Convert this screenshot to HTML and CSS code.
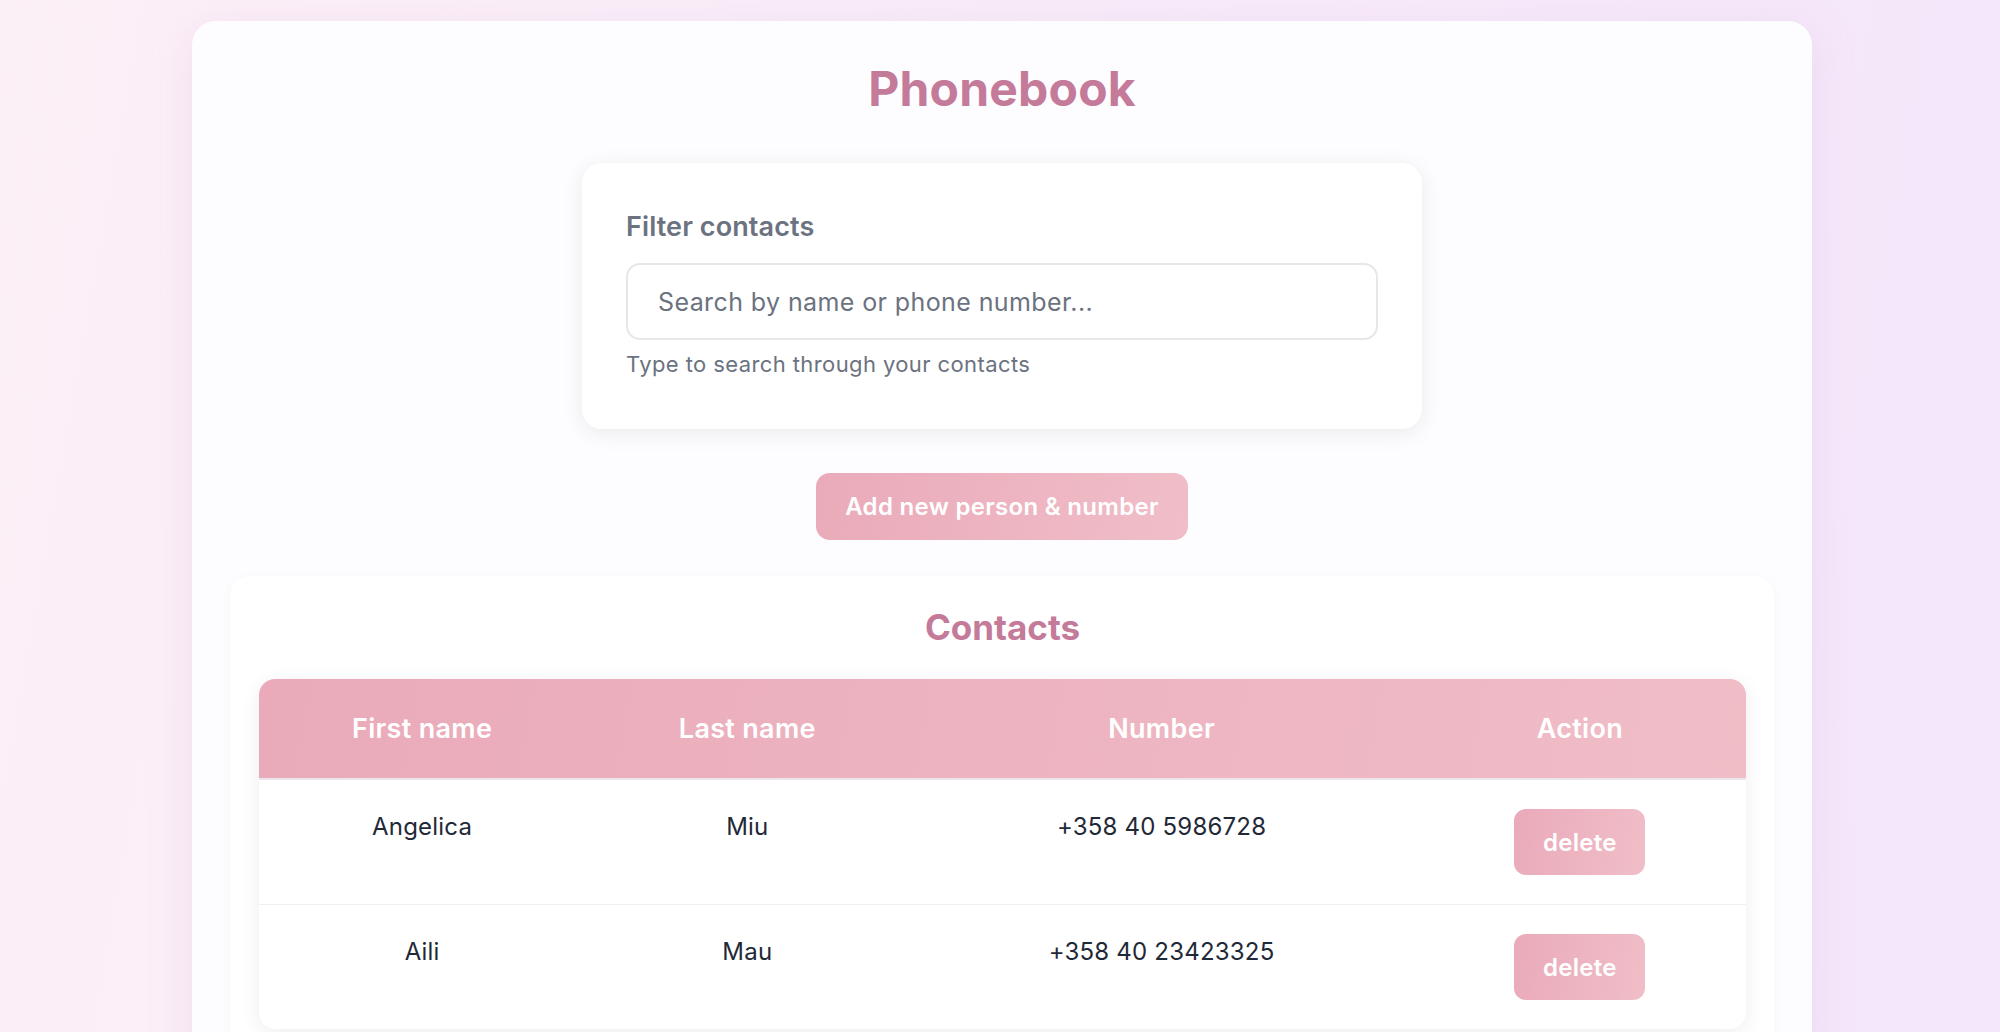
FILE: index.html
```html
<!DOCTYPE html>
<html lang="en">
<head>
<meta charset="utf-8">
<title>Phonebook</title>
<link rel="stylesheet" href="styles.css">
</head>
<body>
<main class="app">
  <h1 class="title">Phonebook</h1>

  <section class="filter-card">
    <label class="filter-label" for="filter">Filter contacts</label>
    <input id="filter" class="filter-input" type="text" placeholder="Search by name or phone number...">
    <p class="filter-help">Type to search through your contacts</p>
  </section>

  <div class="add-row">
    <button class="add-btn" type="button">Add new person &amp; number</button>
  </div>

  <section class="contacts-card">
    <h2 class="contacts-title">Contacts</h2>
    <table class="contacts-table">
      <colgroup>
        <col class="col-first">
        <col class="col-last">
        <col class="col-number">
        <col class="col-action">
      </colgroup>
      <thead>
        <tr>
          <th>First name</th>
          <th>Last name</th>
          <th>Number</th>
          <th>Action</th>
        </tr>
      </thead>
      <tbody>
        <tr>
          <td>Angelica</td>
          <td>Miu</td>
          <td>+358 40 5986728</td>
          <td><button class="delete-btn" type="button">delete</button></td>
        </tr>
        <tr>
          <td>Aili</td>
          <td>Mau</td>
          <td>+358 40 23423325</td>
          <td><button class="delete-btn" type="button">delete</button></td>
        </tr>
      </tbody>
    </table>
  </section>
</main>
</body>
</html>
```

FILE: styles.css
```css
* {
  box-sizing: border-box;
}

html, body {
  margin: 0;
  padding: 0;
}

body {
  min-height: 100vh;
  background: linear-gradient(100deg, #fcf0f7 0%, #f8ebf9 50%, #f4e6fb 100%);
  font-family: Inter, "Noto Sans", "Liberation Sans", sans-serif;
  color: #1f2937;
  padding: 21px 0 40px 4px;
}

.app {
  width: 1620px;
  margin: 0 auto;
  background: #fdfcff;
  border-radius: 24px;
  padding: 38px 38px 40px;
  box-shadow: 0 10px 40px rgba(214, 170, 214, 0.25);
}

.title {
  margin: 0;
  text-align: center;
  font-size: 48px;
  line-height: 60px;
  font-weight: 700;
  letter-spacing: 0.2px;
  color: #c47a99;
}

.filter-card {
  width: 840px;
  margin: 44px auto 0;
  background: #ffffff;
  border-radius: 20px;
  padding: 46px 44px 49px;
  box-shadow: 0 4px 22px rgba(0, 0, 0, 0.08);
}

.filter-label {
  display: block;
  font-size: 27px;
  line-height: 36px;
  font-weight: 600;
  letter-spacing: 0.1px;
  color: #6b7280;
}

.filter-input {
  display: block;
  width: 100%;
  height: 77px;
  margin-top: 18px;
  padding: 0 30px;
  border: 2px solid #e5e7eb;
  border-radius: 14px;
  font-family: inherit;
  font-size: 25px;
  letter-spacing: 0.4px;
  color: #1f2937;
  background: #fff;
  outline: none;
}

.filter-input::placeholder {
  color: #6b7280;
}

.filter-help {
  margin: 8px 0 0;
  font-size: 22px;
  line-height: 32px;
  letter-spacing: 0.4px;
  color: #6b7280;
}

.add-row {
  display: flex;
  justify-content: center;
  margin-top: 44px;
}

.add-btn {
  width: 372px;
  height: 67px;
  border: none;
  border-radius: 14px;
  background: linear-gradient(100deg, #eaaab9 0%, #f0bec8 100%);
  color: #ffffff;
  font-family: inherit;
  font-size: 24px;
  font-weight: 600;
  letter-spacing: 0.3px;
  cursor: pointer;
}

.contacts-card {
  margin-top: 36px;
  background: #ffffff;
  border-radius: 20px;
  padding: 30px 28px 30px 29px;
  box-shadow: 0 2px 12px rgba(0, 0, 0, 0.03);
}

.contacts-title {
  margin: 0 0 30px;
  text-align: center;
  font-size: 35px;
  line-height: 43px;
  font-weight: 700;
  color: #c47a99;
}

.contacts-table {
  width: 100%;
  table-layout: fixed;
  border-collapse: separate;
  border-spacing: 0;
  border-radius: 16px;
  overflow: hidden;
  box-shadow: 0 4px 20px rgba(0, 0, 0, 0.07);
  background: #fff;
}

.col-first { width: 326px; }
.col-last { width: 324px; }
.col-number { width: 504px; }
.col-action { width: 332px; }

.contacts-table thead tr {
  background: linear-gradient(100deg, #eaaab9 0%, #f0bdc7 100%);
}

.contacts-table th {
  height: 101px;
  padding: 0 16px;
  text-align: center;
  vertical-align: middle;
  font-size: 27px;
  font-weight: 600;
  letter-spacing: 0.3px;
  color: #ffffff;
  border-bottom: 2px solid #ece6ec;
}

.contacts-table td {
  padding: 29px 16px;
  text-align: center;
  vertical-align: top;
  font-size: 24px;
  line-height: 36px;
  letter-spacing: 0.2px;
  color: #1f2937;
  border-bottom: 1px solid #f1eff2;
}

.contacts-table tbody tr:last-child td {
  border-bottom: none;
}

.delete-btn {
  display: inline-block;
  width: 131px;
  height: 66px;
  padding: 0;
  border: none;
  border-radius: 12px;
  background: linear-gradient(100deg, #eaaab9 0%, #f0bec8 100%);
  color: #ffffff;
  font-family: inherit;
  font-size: 24px;
  font-weight: 600;
  letter-spacing: 0.3px;
  vertical-align: top;
  cursor: pointer;
}
```
